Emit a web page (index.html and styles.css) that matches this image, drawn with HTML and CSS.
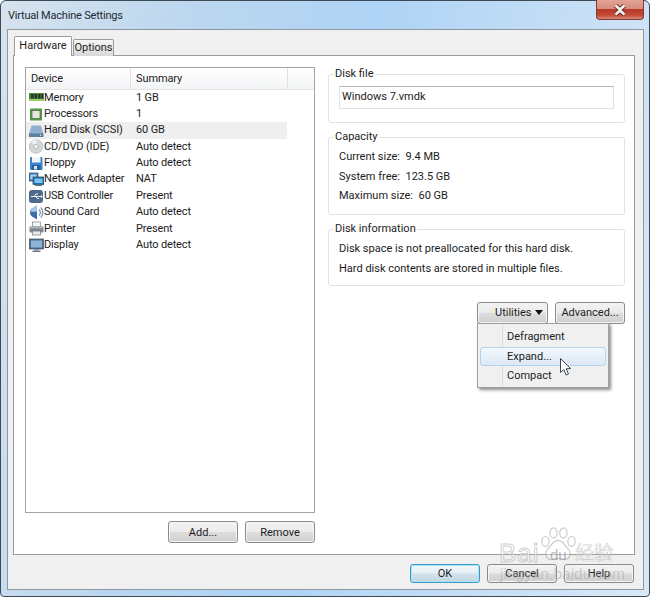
FILE: index.html
```html
<!DOCTYPE html>
<html lang="en">
<head>
<meta charset="utf-8">
<title>Virtual Machine Settings</title>
<link rel="stylesheet" href="styles.css">
</head>
<body>
<div class="window">
  <header class="titlebar">
    <span class="title">Virtual Machine Settings</span>
    <button class="close" aria-label="Close">
      <svg width="16" height="12" viewBox="0 0 16 12"><path d="M3.500 1.500 8 5.500l4.500-4M3.500 10.500 8 6.500l4.500 4" fill="none" stroke="#5a2a22" stroke-width="4.400"/><path d="M3.500 1.500 8 5.500l4.500-4M3.500 10.500 8 6.500l4.500 4" fill="none" stroke="#f4f1ee" stroke-width="2.800"/></svg>
    </button>
  </header>
  <div class="client">
    <nav class="tabs">
      <span class="tab tab-active">Hardware</span>
      <span class="tab">Options</span>
    </nav>
    <main class="panel">
      <section class="left">
        <div class="list">
          <div class="list-head">
            <span class="col-device">Device</span>
            <span class="col-summary">Summary</span>
            <span class="col-rest"></span>
          </div>
          <div class="row">
            <span class="cell-device"><svg class="icon" viewBox="0 0 15 15"><rect x="0" y="3" width="15" height="8" fill="#4f8a3a"/><rect x="0" y="9" width="15" height="2" fill="#9ccb6a"/><path d="M2 4h2.500v4.500H2zM5.500 4H8v4.500H5.500zM9 4h2.500v4.500H9zM12.300 4H14v4.500h-1.700z" fill="#26352a"/></svg>Memory</span><span class="cell-summary">1 GB</span>
          </div>
          <div class="row">
            <span class="cell-device"><svg class="icon" viewBox="0 0 15 15"><rect x="1" y="1.500" width="12" height="12" fill="#4e9a46"/><rect x="3" y="3.500" width="8" height="8" fill="#e4e6e0" stroke="#5d6b58" stroke-width=".8"/></svg>Processors</span><span class="cell-summary">1</span>
          </div>
          <div class="row row-selected">
            <span class="cell-device"><svg class="icon" viewBox="0 0 15 15"><path d="M2.500 2.500h9.500L14.500 11H0z" fill="#8fb0d0"/><path d="M0 10.500h14.500v3.500H0z" fill="#5e7f9f"/><circle cx="11.500" cy="12.200" r=".8" fill="#cfe2f2"/></svg>Hard Disk (SCSI)</span><span class="cell-summary">60 GB</span>
          </div>
          <div class="row">
            <span class="cell-device"><svg class="icon" viewBox="0 0 15 15"><circle cx="7" cy="7.500" r="6.800" fill="#d3d6d8" stroke="#a8acb0" stroke-width=".6"/><path d="M7 7.500 2 3a6.800 6.800 0 0 1 6-2.300z" fill="#eef0f1"/><circle cx="7" cy="7.500" r="2" fill="#fff" stroke="#9a9fa4" stroke-width=".7"/></svg>CD/DVD (IDE)</span><span class="cell-summary">Auto detect</span>
          </div>
          <div class="row">
            <span class="cell-device"><svg class="icon" viewBox="0 0 15 15"><rect x="1" y="1" width="12.500" height="13" rx="1" fill="#3a84cf"/><rect x="3" y="1" width="8.500" height="5.500" fill="#eef4fa"/><rect x="3" y="9" width="8.500" height="5" fill="#2a5f9c"/><rect x="5" y="10" width="3" height="3.500" fill="#d6e4f2"/></svg>Floppy</span><span class="cell-summary">Auto detect</span>
          </div>
          <div class="row">
            <span class="cell-device"><svg class="icon" viewBox="0 0 15 15"><rect x="0" y="1" width="9" height="8" fill="#3f7fb5" stroke="#2c4f70" stroke-width=".7"/><rect x="1.500" y="2.500" width="6" height="5" fill="#a9d4ef"/><rect x="4" y="5" width="11" height="7.500" fill="#1f6fae" stroke="#24465f" stroke-width=".7"/><rect x="5.500" y="6.500" width="8" height="4.500" fill="#7cc2ea"/><rect x="6" y="12.500" width="7" height="1.500" fill="#58748c"/></svg>Network Adapter</span><span class="cell-summary">NAT</span>
          </div>
          <div class="row">
            <span class="cell-device"><svg class="icon" viewBox="0 0 15 15"><rect x="0" y="1" width="14" height="13" rx="3" fill="#4d6a8c"/><path d="M2 7.500h10M5 7.500l2-2.500h2M6.500 7.500l2 2h1.500" fill="none" stroke="#f2f5f8" stroke-width="1"/><path d="M12 6v3l2-1.500z" fill="#f2f5f8"/></svg>USB Controller</span><span class="cell-summary">Present</span>
          </div>
          <div class="row">
            <span class="cell-device"><svg class="icon" viewBox="0 0 15 15"><path d="M3 3.500 8 .5v14l-5-3a5 5 0 0 1 0-8z" fill="#3c6ea8"/><path d="M3 3.500 8 .5v6L2 7a5 5 0 0 1 1-3.500z" fill="#a8c8e6"/><path d="M10 4.500a4 4 0 0 1 0 6M11.800 2.500a7 7 0 0 1 0 10" fill="none" stroke="#6f93b8" stroke-width="1.200"/></svg>Sound Card</span><span class="cell-summary">Auto detect</span>
          </div>
          <div class="row">
            <span class="cell-device"><svg class="icon" viewBox="0 0 15 15"><rect x="3.500" y="1" width="8" height="5" fill="#f4f4f4" stroke="#7b8087" stroke-width=".7"/><rect x="0.500" y="5.500" width="14" height="6" rx="1" fill="#7f868e"/><rect x="0.500" y="5.500" width="14" height="2" fill="#aeb3b8"/><rect x="3.500" y="10" width="8" height="4" fill="#ebebeb" stroke="#6d7278" stroke-width=".7"/></svg>Printer</span><span class="cell-summary">Present</span>
          </div>
          <div class="row">
            <span class="cell-device"><svg class="icon" viewBox="0 0 15 15"><rect x="0.500" y="1" width="14" height="10" fill="#4a6f93" stroke="#3a4f66" stroke-width=".7"/><rect x="2" y="2.500" width="11" height="7" fill="#8db4d6"/><path d="M5.500 11h4v1.500h-4z" fill="#8b949c"/><path d="M3.500 12.500h8V14h-8z" fill="#6a7682"/></svg>Display</span><span class="cell-summary">Auto detect</span>
          </div>
        </div>
        <div class="actions">
          <button class="btn">Add...</button>
          <button class="btn">Remove</button>
        </div>
      </section>
      <section class="right">
        <fieldset class="group group-file">
          <legend>Disk file</legend>
          <div class="input">Windows 7.vmdk</div>
        </fieldset>
        <fieldset class="group group-lines group-capacity">
          <legend>Capacity</legend>
          <p>Current size:&nbsp; 9.4 MB</p>
          <p>System free:&nbsp; 123.5 GB</p>
          <p>Maximum size:&nbsp; 60 GB</p>
        </fieldset>
        <fieldset class="group group-lines group-info">
          <legend>Disk information</legend>
          <p>Disk space is not preallocated for this hard disk.</p>
          <p>Hard disk contents are stored in multiple files.</p>
        </fieldset>
        <div class="utility-row">
          <button class="btn btn-utilities">Utilities<i class="caret"></i></button>
          <button class="btn">Advanced...</button>
        </div>
      </section>
    </main>
    <footer class="footer">
      <button class="btn btn-small btn-default">OK</button>
      <button class="btn btn-small">Cancel</button>
      <button class="btn btn-small">Help</button>
    </footer>
  </div>

  <div class="menu">
    <div class="menu-item">Defragment</div>
    <div class="menu-item menu-item-hover">Expand...</div>
    <div class="menu-item">Compact</div>
  </div>
  <svg class="cursor" width="12" height="18" viewBox="0 0 12 18"><path d="M.5.500v14l3.300-3 2.300 5.500 2.400-1-2.300-5.300h4.500z" fill="#fff" stroke="#3c4650" stroke-width="1"/></svg>

  <div class="watermark">
    <span class="wm-bai">Bai</span>
    <svg class="wm-paw" width="36" height="37" viewBox="0 0 40 41"><g fill="rgba(255,255,255,.35)" stroke="rgba(150,150,150,.5)" stroke-width="1.300"><ellipse cx="6" cy="16" rx="4" ry="5.500"/><ellipse cx="15" cy="6.500" rx="4" ry="5.500"/><ellipse cx="26" cy="6.500" rx="4" ry="5.500"/><ellipse cx="35" cy="16" rx="4" ry="5.500"/><path d="M20 15c6 0 7 5 11 9 5 5 2 13-5 12-3-.5-4-1-6-1s-3 .5-6 1c-7 1-10-7-5-12 4-4 5-9 11-9z"/></g></svg>
    <span class="wm-du">du</span>
    <span class="wm-cn">经验</span>
    <span class="wm-url">jingyan.baidu.com</span>
  </div>
</div>
</body>
</html>
```

FILE: styles.css
```css
* { box-sizing: border-box; }
html, body { margin: 0; padding: 0; }
body {
  width: 650px;
  height: 597px;
  overflow: hidden;
  background: #fff;
  font-family: Roboto, "Noto Sans", sans-serif;
  font-size: 11px;
  color: #1c1c1c;
}
.window {
  position: relative;
  width: 650px;
  height: 597px;
  display: flex;
  flex-direction: column;
  padding: 0 5px 6px 6px;
  border: 1px solid #3c4a56;
  border-radius: 6px 6px 4px 4px;
  background: linear-gradient(100deg, #d6e3ee 0%, #bcd7ef 25%, #aed3f5 50%, #c4def6 75%, #d9e8f6 100%);
}
.titlebar {
  height: 28px;
  flex: none;
  display: flex;
  justify-content: space-between;
  align-items: flex-start;
}
.title {
  margin: 7px 0 0 1px;
  font-size: 11px;
  letter-spacing: -.2px;
  line-height: 16px;
  color: #1e2a33;
}
.close {
  width: 48px;
  height: 20px;
  margin: -1px 0 0 0;
  padding: 0;
  display: flex;
  align-items: center;
  justify-content: center;
  border: 1px solid #7d3b33;
  border-top: 0;
  border-radius: 0 0 4px 4px;
  background: linear-gradient(#e2a496 0%, #d88d7d 45%, #b73a26 50%, #c44a35 80%, #dc8a78 100%);
}
.client {
  flex: 1;
  display: flex;
  flex-direction: column;
  padding: 6px 8px 0 5px;
  border: 1px solid #8d979f;
  background: #f0f0f0;
}
.tabs {
  height: 20px;
  display: flex;
  align-items: flex-end;
  padding-left: 1px;
  gap: 1px;
  position: relative;
  z-index: 1;
  margin-bottom: -1px;
}
.tab {
  height: 17px;
  width: 41px;
  text-align: center;
  line-height: 16px;
  border: 1px solid #9c9c9c;
  border-bottom: 0;
  border-radius: 2px 2px 0 0;
  background: linear-gradient(#f6f6f6, #d8d8d8);
}
.tab-active {
  height: 20px;
  width: 58px;
  line-height: 17px;
  background: #fff;
}
.panel {
  height: 500px;
  flex: none;
  display: grid;
  grid-template-columns: 290px 297px;
  column-gap: 13px;
  padding: 11px 0 11px 11px;
  border: 1px solid #9c9c9c;
  background: #fff;
}
.left {
  display: flex;
  flex-direction: column;
}
.list {
  flex: 1;
  border: 1px solid #a3a3a3;
}
.list-head {
  height: 21.5px;
  display: flex;
  line-height: 21px;
  letter-spacing: -.1px;
  background: linear-gradient(#fff, #f3f4f6);
  border-bottom: 1px solid #e4e4e4;
}
.col-device { width: 105px; padding-left: 5px; border-right: 1px solid #e0e0e0; }
.col-summary { width: 157px; padding-left: 5px; border-right: 1px solid #e0e0e0; }
.col-rest { flex: 1; }
.row {
  width: 261px;
  height: 16.4px;
  display: flex;
  line-height: 16.4px;
  letter-spacing: -.15px;
}
.row-selected { background: #efefef; }
.cell-device {
  width: 110px;
  display: flex;
  align-items: center;
  padding-left: 3px;
}
.icon {
  width: 15px;
  height: 15px;
  flex: none;
}
.actions {
  display: flex;
  justify-content: flex-end;
  gap: 7px;
  margin-top: 8px;
}
.btn {
  width: 70px;
  height: 22px;
  padding: 0;
  font: inherit;
  color: #1c1c1c;
  border: 1px solid #8a8a8a;
  border-radius: 3px;
  background: linear-gradient(#f3f3f3 0%, #ebebeb 48%, #dddddd 52%, #cfcfcf 100%);
  box-shadow: inset 0 0 0 1px #f6f6f6;
}
.right {
  display: flex;
  flex-direction: column;
}
.group {
  margin: 0;
  min-width: 0;
  padding: 0 6px;
  border: 1px solid #dce3e8;
  border-radius: 3px;
}
.group + .group { margin-top: 7px; }
.group legend {
  padding: 0 1px;
  margin-left: -1px;
  line-height: 14px;
  height: 14px;
}
.group-file { padding: 5px 10px 13px; }
.group-file legend { margin-left: -5px; }
.input {
  height: 23px;
  line-height: 19px;
  padding-left: 2px;
  border: 1px solid #dfe3e7;
  border-top-color: #b2b7bc;
}
.group-lines p {
  margin: 0;
  padding-left: 4px;
  line-height: 19.7px;
}
.group-lines { padding-top: 3px; }
.group-capacity { padding-bottom: 8px; }
.group-info { padding-bottom: 6px; }
.utility-row {
  display: flex;
  justify-content: flex-end;
  gap: 7px;
  margin-top: 16px;
}
.btn-utilities {
  width: 71px;
  padding-left: 17px;
  display: flex;
  align-items: center;
}
.caret {
  display: inline-block;
  margin-left: 3px;
  border: 4px solid transparent;
  border-top: 5px solid #111;
  border-bottom: 0;
}
.footer {
  display: flex;
  justify-content: flex-end;
  gap: 7px;
  margin-top: 9px;
  padding-right: 1px;
}
.btn-small { height: 19px; line-height: 15px; }
.btn-default {
  border-color: #3c9bc8;
  box-shadow: inset 0 0 0 1px #a8e4f6;
  background: linear-gradient(#f2f8fb 0%, #e6eff4 48%, #d3e2eb 52%, #c3d6e2 100%);
}
.menu {
  position: absolute;
  left: 476px;
  top: 322px;
  width: 132px;
  height: 65px;
  padding: 3px 2px;
  border: 1px solid #a0a0a0;
  background: linear-gradient(90deg, #f0f0f0 0 24px, #dcdcdc 24px 25px, #f0f0f0 25px);
  box-shadow: 2px 2px 3px rgba(0, 0, 0, .45);
}
.menu-item {
  height: 19.500px;
  line-height: 18px;
  padding-left: 26px;
  border: 1px solid transparent;
  border-radius: 3px;
}
.menu-item-hover {
  border-color: #b3d4f0;
  background: linear-gradient(#f2f7fc, #dce9f6);
}
.cursor {
  position: absolute;
  left: 559px;
  top: 357px;
}
.watermark {
  position: absolute;
  left: 0;
  top: 0;
  width: 100%;
  height: 100%;
  pointer-events: none;
}
.wm-bai, .wm-du, .wm-cn, .wm-url { position: absolute; white-space: nowrap; }
.wm-bai {
  left: 498px;
  top: 537px;
  font-family: "Liberation Sans", sans-serif;
  font-size: 26px;
  line-height: 30px;
  letter-spacing: 1px;
  color: rgba(255, 255, 255, .5);
  -webkit-text-stroke: 1px rgba(160, 160, 160, .5);
}
.wm-paw {
  position: absolute;
  left: 539px;
  top: 526px;
}
.wm-du {
  left: 549px;
  top: 546px;
  font-family: "Liberation Sans", sans-serif;
  font-size: 15px;
  line-height: 16px;
  color: rgba(140, 140, 140, .6);
}
.wm-cn {
  left: 574px;
  top: 540px;
  font-family: "Noto Sans CJK SC", sans-serif;
  font-size: 19px;
  line-height: 22px;
  color: rgba(255, 255, 255, .5);
  -webkit-text-stroke: .6px rgba(160, 160, 160, .55);
}
.wm-url {
  left: 499px;
  top: 564px;
  font-family: "Liberation Sans", sans-serif;
  font-size: 15.500px;
  line-height: 18px;
  color: rgba(170, 170, 170, .55);
}
```
